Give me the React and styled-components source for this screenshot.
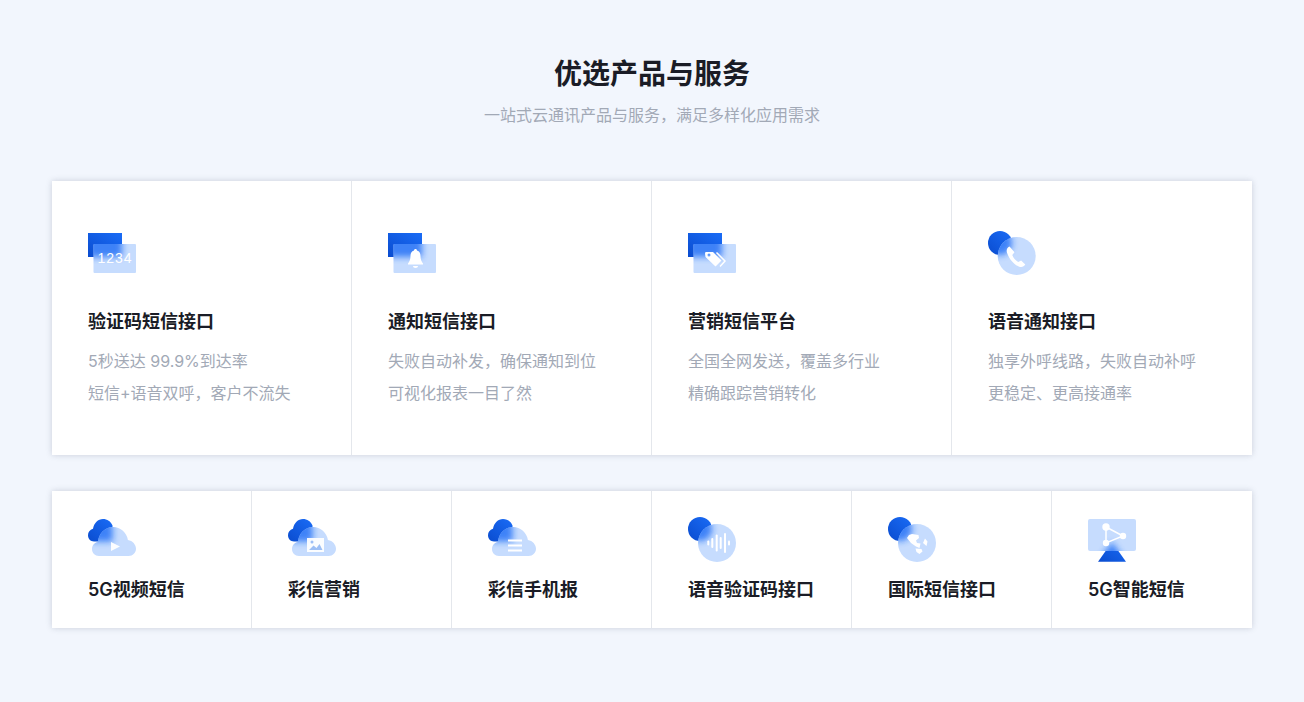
import React from "react";
import styled, { createGlobalStyle } from "styled-components";

const Global = createGlobalStyle`
  html, body { margin: 0; padding: 0; background: #f2f6fd; }
  body { font-family: Inter, "Noto Sans CJK SC", "Noto Sans", sans-serif; }
`;
const Page = styled.main`
  width: 1304px; height: 702px; overflow: hidden; box-sizing: border-box;
  padding-top: 53px; background: #f2f6fd;
`;
const Heading = styled.h2`
  margin: 0; text-align: center; font-size: 28px; line-height: 42px; font-weight: 700; color: #1a1c26;
`;
const Sub = styled.p`
  margin: 7px 0 0; text-align: center; font-size: 16px; line-height: 26px; color: #a2a9b6;
`;
const Grid = styled.section`
  width: 1200px; margin: ${p => p.$mt}px auto 0; background: #fff; display: grid;
  grid-template-columns: repeat(${p => p.$cols}, 1fr); height: ${p => p.$h}px;
  box-shadow: 0 0 6px rgba(60, 70, 90, 0.22);
`;
const Card = styled.article`
  box-sizing: border-box; padding: 50px 0 0 36px; border-right: 1px solid #e4e7ec;
  &:last-child { border-right: 0; }
`;
const SmallCard = styled.article`
  box-sizing: border-box; padding: 26px 0 0 36px; border-right: 1px solid #e4e7ec;
  &:last-child { border-right: 0; }
`;
const IconSvg = styled.svg`
  display: block; width: 48px; height: 44px; overflow: visible;
`;
const CardTitle = styled.h3`
  margin: ${p => p.$mt}px 0 0; font-size: 18px; line-height: 26px; font-weight: 600; color: #1a1c26;
`;
const Desc = styled.p`
  margin: 10px 0 0; font-size: 16px; line-height: 32px; color: #a2a9b6;
`;

const Frosted = ({ id, back, front, children }) => (
  <IconSvg viewBox="0 0 48 44" aria-hidden="true">
    <defs>
      <linearGradient id={`${id}g`} x1="0" y1="1" x2="1" y2="0">
        <stop offset="0" stopColor="#0a4ccf" />
        <stop offset="1" stopColor="#1a6cf6" />
      </linearGradient>
      <clipPath id={`${id}c`}>{front({})}</clipPath>
      <filter id={`${id}b`} x="-30%" y="-30%" width="160%" height="160%">
        <feGaussianBlur stdDeviation="3" />
      </filter>
    </defs>
    {back({ fill: `url(#${id}g)` })}
    {front({ fill: "#c6dcfe" })}
    <g clipPath={`url(#${id}c)`}>
      <g filter={`url(#${id}b)`} opacity="0.8">{back({ fill: "#1a6cf6" })}</g>
    </g>
    {children}
  </IconSvg>
);

const backRect = p => <rect x="0" y="2" width="34" height="24" {...p} />;
const frontRect = p => <rect x="5.5" y="13" width="42.5" height="29" rx="1" {...p} />;
const backCloud = p => (
  <path d="M6 24.500C2.500 24.500 0 21.800 0 18.300c0-3 1.800-5.500 5-6.500C6 6 10 2 15 2c4.200 0 7.700 2.200 9.500 6.500v16Z" {...p} />
);
const frontCloud = p => (
  <path d="M11 39c-4 0-7-3.200-7-7 0-3.600 2.600-6.500 6-7C10.400 17 16.700 10 25 10c7.600 0 13.900 5.700 14.900 13C44.600 23.800 48 27.600 48 31.800 48 35.800 44.800 39 40.600 39Z" {...p} />
);
const backCircleTop = p => <circle cx="12" cy="12" r="12" {...p} />;
const frontCircleTop = p => <circle cx="28.700" cy="25" r="19" {...p} />;
const backCircleLow = p => <circle cx="12" cy="12" r="12" {...p} />;
const frontCircleLow = p => <circle cx="29" cy="26" r="19" {...p} />;
const backTriangle = p => <path d="M24 25 38 44.700H10Z" {...p} />;
const frontScreen = p => <rect x="0" y="2" width="48" height="32" rx="2" {...p} />;

const CodeIcon = () => (
  <Frosted id="code" back={backRect} front={frontRect}>
    <text x="9.500" y="32" fontFamily="Liberation Sans, sans-serif" fontSize="14" letterSpacing="1" fill="#fff">1234</text>
  </Frosted>
);
const BellIcon = () => (
  <Frosted id="bell" back={backRect} front={frontRect}>
    <path d="M27.500 18c.9 0 1.500.7 1.500 1.500 2.500.6 3.500 2.700 3.500 5.500 0 3.500 1 5.500 2.500 7.500v1H20v-1c1.500-2 2.500-4 2.500-7.500 0-2.800 1-4.900 3.500-5.500 0-.8.600-1.500 1.500-1.500Z" fill="#fff" />
    <path d="M25 35h5c0 1.200-1.100 2-2.500 2s-2.500-.8-2.500-2Z" fill="#fff" />
  </Frosted>
);
const TagIcon = () => (
  <Frosted id="tag" back={backRect} front={frontRect}>
    <path fillRule="evenodd" d="M17 22.500 17.500 21H25l8.500 8.500-6 6L17.500 26Zm4 0a1.500 1.500 0 1 0 0 3 1.500 1.500 0 0 0 0-3Z" fill="#fff" />
    <path d="M28.500 21.500 37 30l-5 5.500" fill="none" stroke="#fff" strokeWidth="1.500" />
  </Frosted>
);
const PhoneIcon = () => (
  <Frosted id="phone" back={backCircleTop} front={frontCircleTop}>
    <path d="M21.500 15.500c-2.800 1.300-3.400 3.800-2.300 6.800 2 5.400 6.300 11 11.500 13.200 2.800 1.100 5.200.4 6.600-1.900l-4.200-4-2.800 1.400c-2.800-1.400-4.800-3.800-6-7l2.200-2.800Z" fill="#fff" />
  </Frosted>
);
const PlayIcon = () => (
  <Frosted id="play" back={backCloud} front={frontCloud}>
    <path d="M23 25l9 4.500-9 4.500Z" fill="#fff" fillOpacity="0.95" />
  </Frosted>
);
const ImageIcon = () => (
  <Frosted id="img" back={backCloud} front={frontCloud}>
    <rect x="19" y="21" width="17" height="14" fill="#fff" fillOpacity="0.92" />
    <path d="M21 33l4.500-4.500 3 2.500 3-4 3 6Z" fill="#9dbff5" />
    <circle cx="24" cy="25" r="1.500" fill="#9dbff5" />
  </Frosted>
);
const ListIcon = () => (
  <Frosted id="list" back={backCloud} front={frontCloud}>
    <rect x="20" y="22.500" width="14" height="2" fill="#fff" />
    <rect x="20" y="27.500" width="14" height="2" fill="#fff" />
    <rect x="20" y="32.500" width="14" height="2" fill="#fff" />
  </Frosted>
);
const WaveIcon = () => (
  <Frosted id="wave" back={backCircleLow} front={frontCircleLow}>
    {[[20.3, 5], [24.3, 10], [28.7, 17], [32.7, 12], [37, 20], [41, 5]].map(([x, h]) => (
      <rect key={x} x={x - 1} y={26 - h / 2} width="2" height={h} rx="1" fill="#fff" />
    ))}
  </Frosted>
);
const GlobeIcon = () => (
  <Frosted id="globe" back={backCircleLow} front={frontCircleLow}>
    <path d="M24 17l6.500 1 .5 3-3 2.500 1 2.500 3.500.5-1 4.500-3.500-1.500-5-3.500-4-5 2-3Z" fill="#fff" />
    <path d="M37 21.500l2.500 3-1 4.500-3.500-3Z" fill="#fff" />
    <path d="M27.500 31.500l6 .5 1 2.500-3 2.500-3-2Z" fill="#fff" />
  </Frosted>
);
const GraphIcon = () => (
  <Frosted id="graph" back={backTriangle} front={frontScreen}>
    <path d="M18 10 35 19 18 26Z" fill="none" stroke="#fff" strokeWidth="1.500" />
    <circle cx="18" cy="10" r="3.700" fill="#fff" />
    <circle cx="35" cy="19" r="3.200" fill="#fff" />
    <circle cx="18" cy="26" r="3.200" fill="#fff" />
  </Frosted>
);

const main = [
  { title: "验证码短信接口", lines: ["5秒送达 99.9%到达率", "短信+语音双呼，客户不流失"], Icon: CodeIcon },
  { title: "通知短信接口", lines: ["失败自动补发，确保通知到位", "可视化报表一目了然"], Icon: BellIcon },
  { title: "营销短信平台", lines: ["全国全网发送，覆盖多行业", "精确跟踪营销转化"], Icon: TagIcon },
  { title: "语音通知接口", lines: ["独享外呼线路，失败自动补呼", "更稳定、更高接通率"], Icon: PhoneIcon },
];
const more = [
  { title: "5G视频短信", Icon: PlayIcon },
  { title: "彩信营销", Icon: ImageIcon },
  { title: "彩信手机报", Icon: ListIcon },
  { title: "语音验证码接口", Icon: WaveIcon },
  { title: "国际短信接口", Icon: GlobeIcon },
  { title: "5G智能短信", Icon: GraphIcon },
];

export default function App() {
  return (
    <Page>
      <Global />
      <Heading>优选产品与服务</Heading>
      <Sub>一站式云通讯产品与服务，满足多样化应用需求</Sub>
      <Grid $cols={4} $h={274} $mt={53}>
        {main.map(({ title, lines, Icon }) => (
          <Card key={title}>
            <Icon />
            <CardTitle $mt={34}>{title}</CardTitle>
            <Desc>{lines[0]}<br />{lines[1]}</Desc>
          </Card>
        ))}
      </Grid>
      <Grid $cols={6} $h={137} $mt={36}>
        {more.map(({ title, Icon }) => (
          <SmallCard key={title}>
            <Icon />
            <CardTitle $mt={16}>{title}</CardTitle>
          </SmallCard>
        ))}
      </Grid>
    </Page>
  );
}
